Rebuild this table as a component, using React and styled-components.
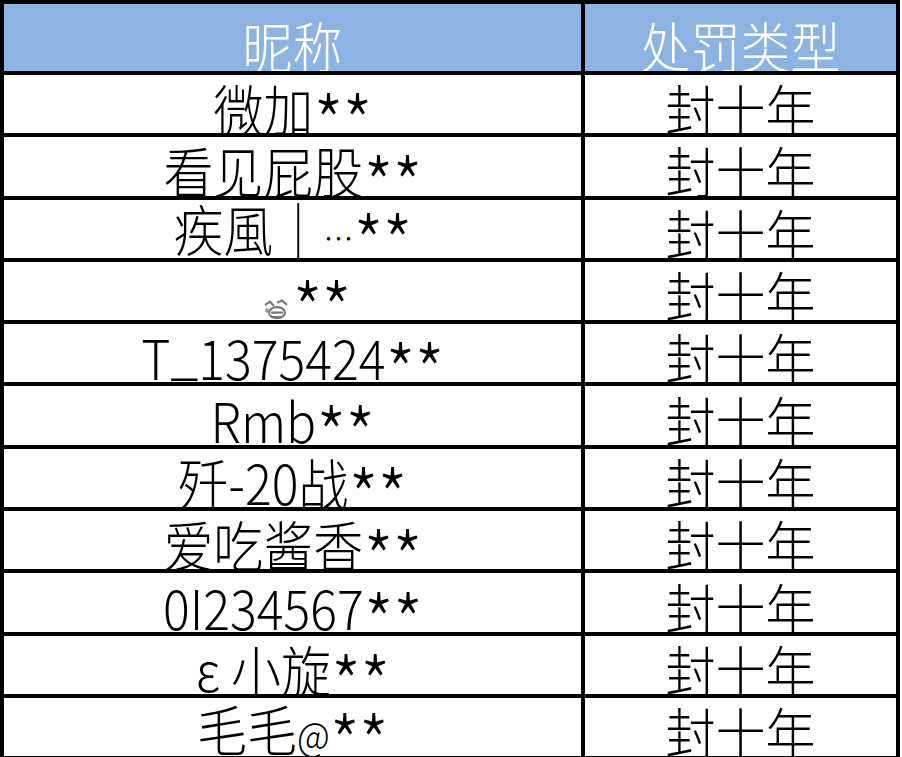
import styled, { createGlobalStyle } from 'styled-components';

const GlobalStyle = createGlobalStyle`
  html, body {
    margin: 0;
    padding: 0;
    background: #ffffff;
  }
  body {
    font-family: "Noto Sans CJK SC", "Noto Sans", sans-serif;
  }
`;

const Sheet = styled.div`
  display: grid;
  grid-template-columns: 581px 315px;
  grid-template-rows: 71px repeat(11, 62.3px);
  border-left: 4px solid #000;
  border-top: 4px solid #000;
  width: 896px;
  height: 753px;
  overflow: hidden;
`;

const Cell = styled.div`
  box-sizing: border-box;
  border-right: 4px solid #000;
  border-bottom: 4px solid #000;
  background: ${({ $head }) => ($head ? '#8db3e2' : '#ffffff')};
  color: ${({ $head }) => ($head ? '#ffffff' : '#000000')};
  display: flex;
  justify-content: center;
  align-items: center;
  overflow: hidden;
  padding-top: ${({ $head }) => ($head ? 12 : 6)}px;
  padding-left: ${({ $shift }) => $shift || 0}px;
`;

const Text = styled.span`
  display: inline-block;
  font-size: 50px;
  font-weight: 300;
  line-height: 50px;
  white-space: pre;
  transform: scaleY(1.1);
`;

const Stars = styled.span`
  font-size: 68px;
  line-height: 0;
  vertical-align: -19px;
  letter-spacing: -1px;
`;

const Small = styled.span`
  font-size: ${({ $size }) => $size}px;
`;

const Underscore = styled.span`
  line-height: 0;
  vertical-align: 6px;
`;

const Face = styled.svg`
  width: 28px;
  height: 24px;
  vertical-align: -4px;
  margin-right: 2px;
`;

function Emoji() {
  return (
    <Face viewBox="0 0 28 24">
      <g fill="none" stroke="#777" strokeWidth="2">
        <path d="M3 8 L8 5 L12 9" />
        <path d="M15 6 L20 4 L25 8" />
        <ellipse cx="15" cy="15" rx="8" ry="5" />
        <path d="M9 15 L21 15" />
        <path d="M11 19 L19 19" />
      </g>
      <circle cx="5" cy="13" r="2" fill="#999" />
    </Face>
  );
}

const rows = [
  { name: '微加' },
  { name: '看见屁股' },
  {
    name: (
      <>
        疾風｜<Small $size={30}>…</Small>
      </>
    ),
  },
  { name: <Emoji />, shift: 28 },
  {
    name: (
      <>
        T<Underscore>_</Underscore>1375424
      </>
    ),
  },
  { name: 'Rmb' },
  { name: '歼-20战' },
  { name: '爱吃酱香' },
  { name: '0I234567' },
  { name: 'ε 小旋' },
  {
    name: (
      <>
        毛毛<Small $size={36}>@</Small>
      </>
    ),
  },
];

function RowCells({ row }) {
  return (
    <>
      <Cell $shift={row.shift}>
        <Text>
          {row.name}
          <Stars>**</Stars>
        </Text>
      </Cell>
      <Cell>
        <Text>封十年</Text>
      </Cell>
    </>
  );
}

export default function App() {
  return (
    <>
      <GlobalStyle />
      <Sheet>
        <Cell $head>
          <Text>昵称</Text>
        </Cell>
        <Cell $head>
          <Text>处罚类型</Text>
        </Cell>
        {rows.map((row, i) => (
          <RowCells key={i} row={row} />
        ))}
      </Sheet>
    </>
  );
}
